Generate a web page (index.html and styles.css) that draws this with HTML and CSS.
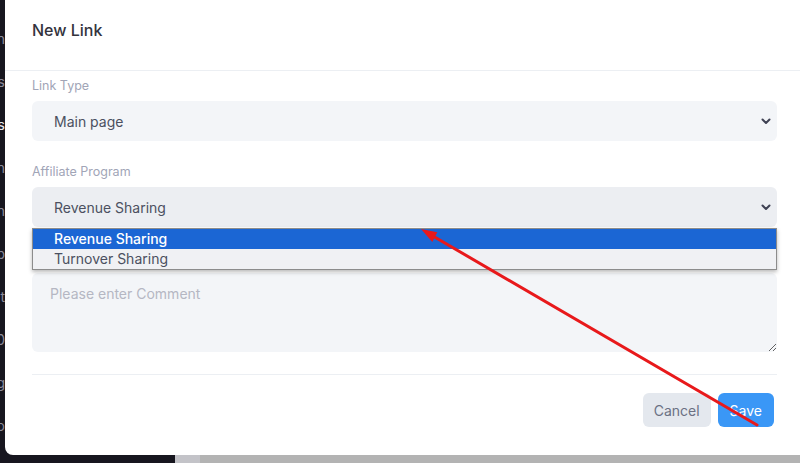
FILE: index.html
```html
<!DOCTYPE html>
<html lang="en">
<head>
<meta charset="utf-8">
<title>New Link</title>
<link rel="stylesheet" href="styles.css">
</head>
<body>
<div class="screen">
  <div class="top">
    <nav class="sidebar">
      <div class="nav-item"><span>Admin</span></div>
      <div class="nav-item"><span>Users</span></div>
      <div class="nav-item active"><span>Links</span></div>
      <div class="nav-item"><span>Campaign</span></div>
      <div class="nav-item"><span>Commission</span></div>
      <div class="nav-item"><span>Web</span></div>
      <div class="nav-item"><span>Payout</span></div>
      <div class="nav-item"><span>2020</span></div>
      <div class="nav-item"><span>Catalog</span></div>
      <div class="nav-item"><span>Promo</span></div>
    </nav>
    <section class="modal">
      <header class="modal-header">New Link</header>
      <div class="modal-body">
        <div class="group">
          <div class="label">Link Type</div>
          <div class="select">
            <span>Main page</span>
            <svg class="chev" width="10" height="7" viewBox="0 0 10 7"><path d="M1.5 1.5 L5 5 L8.5 1.5" fill="none" stroke="#3f4254" stroke-width="2" stroke-linecap="round" stroke-linejoin="round"/></svg>
          </div>
        </div>
        <div class="group">
          <div class="label">Affiliate Program</div>
          <div class="select focused">
            <span>Revenue Sharing</span>
            <svg class="chev" width="10" height="7" viewBox="0 0 10 7"><path d="M1.5 1.5 L5 5 L8.5 1.5" fill="none" stroke="#3f4254" stroke-width="2" stroke-linecap="round" stroke-linejoin="round"/></svg>
            <ul class="dropdown">
              <li class="opt selected">Revenue Sharing</li>
              <li class="opt">Turnover Sharing</li>
            </ul>
          </div>
        </div>
        <div class="group last">
          <div class="label">Comment</div>
          <textarea class="textarea" placeholder="Please enter Comment"></textarea>
        </div>
        <footer class="modal-footer">
          <button class="btn btn-light">Cancel</button>
          <button class="btn btn-primary">Save</button>
        </footer>
      </div>
    </section>
  </div>
  <div class="bottom">
    <div class="seg seg-dark"></div>
    <div class="seg seg-mid"></div>
    <div class="seg seg-grey"></div>
  </div>
</div>
<svg class="annotation" width="800" height="463" viewBox="0 0 800 463">
  <line x1="757" y1="425" x2="432" y2="235.5" stroke="#e8191b" stroke-width="3" stroke-linecap="round"/>
  <polygon points="421,229 437.3,232.3 432.3,241.9" fill="#e8191b"/>
</svg>
</body>
</html>
```
FILE: styles.css
```css
* { box-sizing: border-box; }
html, body { margin: 0; padding: 0; }
body {
  width: 800px;
  height: 463px;
  overflow: hidden;
  background: #17161f;
  font-family: "Inter", "Noto Sans", sans-serif;
  position: relative;
}
.screen {
  display: flex;
  flex-direction: column;
  height: 463px;
}
.top {
  display: flex;
  flex: 1;
  min-height: 0;
}
.sidebar {
  width: 5px;
  flex: none;
  overflow: hidden;
  display: flex;
  flex-direction: column;
  gap: 23px;
  padding-top: 29px;
}
.nav-item {
  display: flex;
  justify-content: flex-end;
  height: 20px;
  line-height: 20px;
  font-size: 14px;
  white-space: nowrap;
  color: #8a8a9a;
}
.nav-item span { flex: none; }
.nav-item.active { color: #e8e8ee; }
.modal {
  flex: 1;
  background: #fff;
  border-bottom-left-radius: 8px;
  display: flex;
  flex-direction: column;
}
.modal-header {
  height: 71px;
  padding: 19px 0 0 27px;
  font-size: 16px;
  line-height: 22px;
  font-weight: 500;
  color: #33333d;
  border-bottom: 1px solid #eceff3;
}
.modal-body {
  padding: 7px 23px 28px 27px;
}
.group { margin-bottom: 23px; }
.group.last { margin-bottom: 0; }
.label {
  font-size: 12.5px;
  line-height: 16px;
  color: #a1a5b7;
  margin-bottom: 7px;
}
.select {
  position: relative;
  height: 40px;
  border-radius: 6px;
  background: #f3f5f8;
  display: flex;
  align-items: center;
  justify-content: space-between;
  padding: 0 6px 0 22px;
  font-size: 14px;
  color: #4b5060;
}
.select.focused { background: #eceef2; }
.chev { display: block; }
.dropdown {
  position: absolute;
  left: 0;
  right: 0;
  top: calc(100% + 1px);
  margin: 0;
  padding: 0;
  list-style: none;
  border: 1px solid #8c8c8c;
  background: #f0f1f4;
  box-shadow: 0 2px 4px rgba(0,0,0,0.28);
  z-index: 2;
}
.opt {
  height: 20px;
  line-height: 20px;
  padding-left: 21px;
  font-size: 14px;
  color: #4b5060;
}
.opt.selected {
  background: #1b66d4;
  color: #fff;
  font-weight: 500;
}
.textarea {
  display: block;
  width: 100%;
  height: 79px;
  border: none;
  border-radius: 6px;
  background: #f3f5f8;
  padding: 12px 18px;
  font-family: inherit;
  font-size: 14px;
  line-height: 18px;
  color: #4b5060;
  resize: vertical;
  outline: none;
}
.textarea::placeholder { color: #b5b7c3; }
.modal-footer {
  margin-top: 22px;
  border-top: 1px solid #eceff3;
  padding: 18px 3px 0 0;
  display: flex;
  justify-content: flex-end;
  gap: 7px;
}
.btn {
  height: 34px;
  border: none;
  border-radius: 6px;
  font-family: inherit;
  font-size: 14px;
  padding: 0 12px;
}
.btn-light { background: #e4e8ee; color: #6b7083; padding: 0 11px; }
.btn-primary { background: #3a97f6; color: #fff; }
.bottom {
  height: 8px;
  display: flex;
  flex: none;
}
.seg-dark { width: 175px; background: #17161f; }
.seg-mid { width: 25px; background: #c3c3c8; }
.seg-grey { flex: 1; background: #b3b3b3; }
.annotation {
  position: absolute;
  left: 0;
  top: 0;
  z-index: 10;
  pointer-events: none;
}
```
